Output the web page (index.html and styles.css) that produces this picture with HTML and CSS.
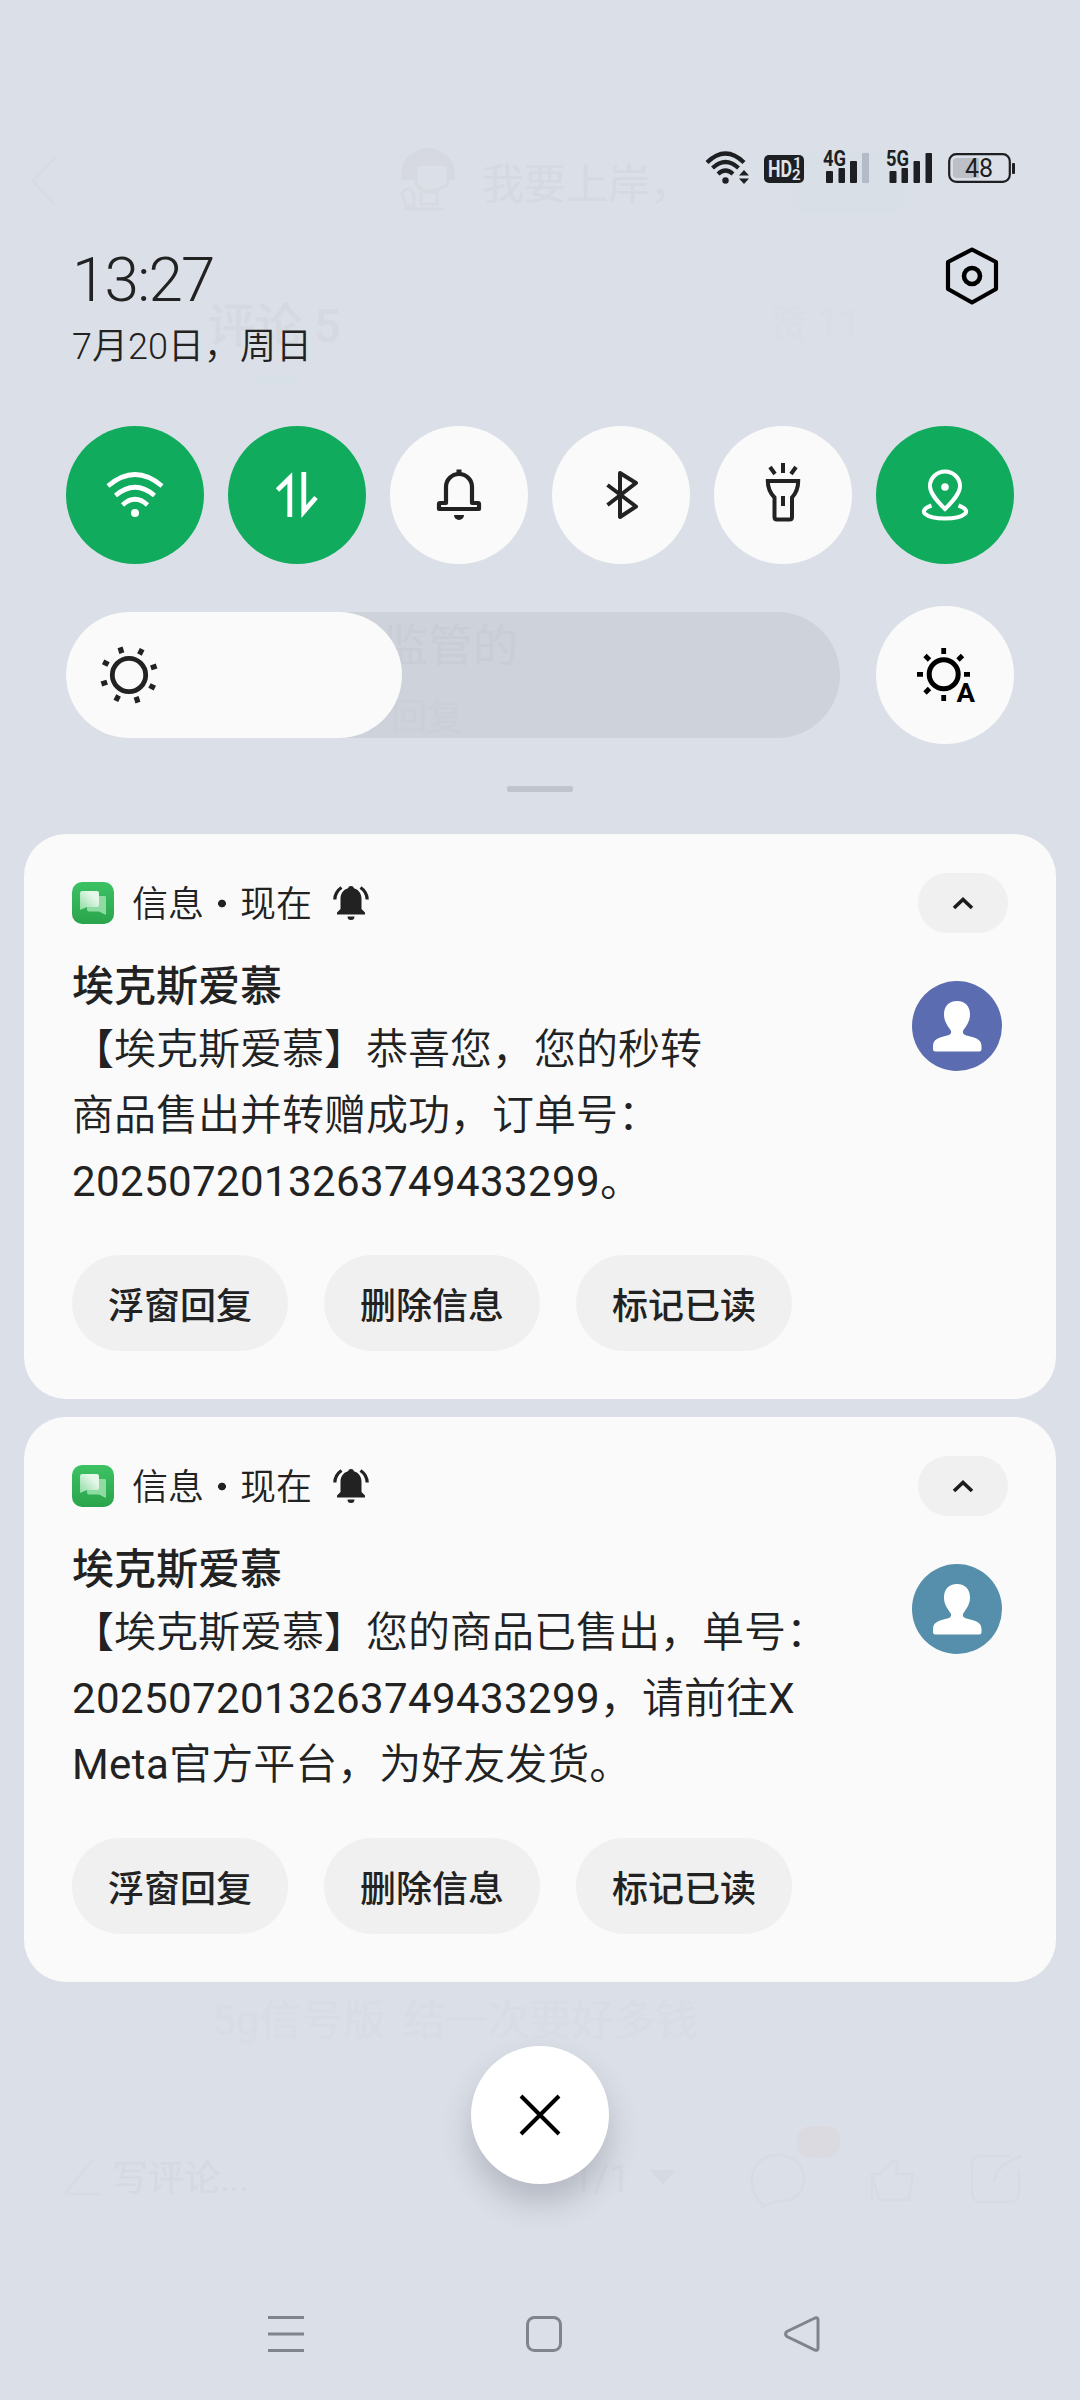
FILE: index.html
```
<!DOCTYPE html>
<html lang="zh-CN">
<head>
<meta charset="utf-8">
<title>通知中心</title>
<link rel="stylesheet" href="styles.css">
</head>
<body>
<svg class="defs" aria-hidden="true">
  <defs>
    <linearGradient id="msg-bg" x1="0" y1="0" x2="0" y2="1"><stop offset="0" stop-color="#3cc263"/><stop offset="1" stop-color="#2aa44c"/></linearGradient>
    <linearGradient id="msg-front" x1="1" y1="0" x2="0" y2="1"><stop offset="0.300" stop-color="#e4f7e9"/><stop offset="1" stop-color="#8fdca2"/></linearGradient>
    <symbol id="app" viewBox="0 0 42 42">
      <rect width="42" height="42" rx="10" fill="url(#msg-bg)"/>
      <path d="M17 14H33q1 0 1 1V33L27 29.500H17q-2 0-2-2V16z" fill="#8fdca2"/>
      <path d="M10 9H25q2 0 2 2V23q0 2-2 2H15L8 28V11q0-2 2-2z" fill="url(#msg-front)"/>
    </symbol>
    <symbol id="ring" viewBox="0 0 36 36">
      <path d="M18 1a3 3 0 0 1 3 2.300C26 4.700 28.500 9 28.500 14V24L32 27.500V29.500H4V27.500L7.500 24V14C7.500 9 10 4.700 15 3.300A3 3 0 0 1 18 1zM14.500 31.500h7a3.500 3.500 0 0 1-7 0z" fill="#222"/>
      <path d="M8.500 2.500Q2 7 1.800 14.500M27.500 2.500Q34 7 34.200 14.500" fill="none" stroke="#222" stroke-width="3.200"/>
    </symbol>
    <symbol id="up" viewBox="0 0 24 16">
      <path d="M3 13L12 4.500L21 13" fill="none" stroke="#1c1c1c" stroke-width="3.600"/>
    </symbol>
    <symbol id="person" viewBox="0 0 90 90">
      <path d="M45 20c8.500 0 13 5.500 13 13.500 0 6-2.500 10-6.500 15.500-1.200 1.900-.8 4 1.500 5C60 56.500 69.500 56.500 69.500 65v3q0 2.500-2.500 2.500H23.500q-2.500 0-2.500-2.500v-3C21 56.500 30 56.500 37 54c2.300-1 2.700-3.100 1.500-5C34.500 43.500 32 39.500 32 33.500 32 25.500 36.500 20 45 20z" fill="#fff"/>
    </symbol>
  </defs>
</svg>

<div class="screen">
  <div class="behind" aria-hidden="true">
    <svg class="behind-art" viewBox="0 0 1080 2400">
      <g fill="none" stroke="#d7dbe3" stroke-width="2.500">
        <path d="M55 157L33 181L55 205"/>
        <path d="M93 2160L65 2193M66 2194H101" />
        <path d="M762 2203q-12-8-10-26c2-14 12-22 26-22s26 9 26 24-12 24-28 22l-14 6z"/>
        <path d="M872 2174v26M872 2174h8l14-14c6 0 2 10 2 14h17l-4 26h-30zM1010 2156h-28q-10 0-10 10v26q0 10 10 10h28q9 0 9-10v-22M994 2182q2-18 28-26"/>
      </g>
      <rect x="793" y="150" width="112" height="63" rx="14" fill="#d8dfe7"/>
      <rect x="797" y="2126" width="43" height="32" rx="14" fill="#dcdae1"/>
      <rect x="256" y="375" width="40" height="10" rx="4" fill="#d6e0e6"/>
      <path d="M401 180v-6a27 26 0 0 1 54 0v6h-8v-14h-32v14z" fill="#d6d9e1"/>
      <path d="M416 166v18q11 14 32 0v-18M402 194q5-10 12 0v12h-8zM421 192h16v12h-16zM404 209h40" fill="none" stroke="#d7dae1" stroke-width="3"/>
      <path d="M650 2170h25l-12 15z" fill="#d5d9e1"/>
    </svg>
    <span class="ghost g-name">我要上岸，</span>
    <span class="ghost g-comments">评论 5</span>
    <span class="ghost g-like">赞 11</span>
    <span class="ghost g-line">5g信号版 结一次要好多钱</span>
    <span class="ghost g-write">写评论...</span>
    <span class="ghost g-page">1/1</span>
  </div>

  <header class="status">
    <svg width="46" height="36" viewBox="0 0 46 36">
      <g fill="none" stroke="#1d1f22" stroke-width="4.200">
        <path d="M2 12.500Q20.500-5.500 39 12.500"/><path d="M7.500 18Q20.500 6 33.500 18"/><path d="M13 24Q20.500 17 28 24"/>
      </g>
      <circle cx="20.500" cy="30.500" r="3.200" fill="#1d1f22"/>
      <path d="M39 20l5 5.500H34zM39 34l5-5.500H34z" fill="#1d1f22"/>
    </svg>
    <svg class="hd" width="40" height="28" viewBox="0 0 40 28">
      <rect width="40" height="28" rx="5" fill="#1d1f22"/>
      <text x="4" y="22" class="hd-main" textLength="24" lengthAdjust="spacingAndGlyphs">HD</text>
      <text x="29" y="13" class="hd-small">1</text><text x="28" y="25" class="hd-small">2</text>
    </svg>
    <svg class="sig4" width="48" height="36" viewBox="0 0 48 36">
      <text x="0" y="16" class="net" textLength="23" lengthAdjust="spacingAndGlyphs">4G</text>
      <g fill="#1d1f22"><rect x="3" y="21" width="7" height="12" rx="1"/><rect x="15.500" y="18" width="6.500" height="15" rx="1"/><rect x="27" y="11" width="7" height="22" rx="1"/></g>
      <rect x="39" y="3" width="7" height="30" rx="1" fill="#b5bbc6"/>
    </svg>
    <svg class="sig5" width="48" height="36" viewBox="0 0 48 36">
      <text x="0" y="16" class="net" textLength="23" lengthAdjust="spacingAndGlyphs">5G</text>
      <g fill="#1d1f22"><rect x="3.500" y="21" width="7" height="12" rx="1"/><rect x="15.500" y="18" width="6.500" height="15" rx="1"/><rect x="27.500" y="11" width="6.500" height="22" rx="1"/><rect x="39.500" y="3" width="6.500" height="30" rx="1"/></g>
    </svg>
    <svg class="battery" width="68" height="30" viewBox="0 0 68 30">
      <rect x="1.200" y="1.200" width="60.600" height="27.600" rx="7" fill="none" stroke="#1d1f22" stroke-width="2.200"/>
      <path d="M9 5H31V25H9q-4 0-4-4V9q0-4 4-4z" fill="#bcbfc5"/>
      <rect x="64" y="10" width="3" height="11" rx="1" fill="#1d1f22"/>
      <text x="31" y="23.500" text-anchor="middle" class="bat-text">48</text>
    </svg>
  </header>

  <section class="head">
    <div>
      <div class="clock">13:27</div>
      <div class="date">7月20日，周日</div>
    </div>
    <svg class="gear" width="56" height="60" viewBox="0 0 56 60">
      <path d="M28 3.500L52 16V43L28 56.500L4 43V16z" fill="none" stroke="#000" stroke-width="4.200" stroke-linejoin="round"/>
      <circle cx="28" cy="30" r="8" fill="none" stroke="#000" stroke-width="4.600"/>
    </svg>
  </section>

  <section class="tiles">
    <div class="tile on"><svg viewBox="0 0 138 138"><g fill="none" stroke="#fff" stroke-width="4.600"><path d="M42 60Q69 37 96 60"/><path d="M49.500 69.500Q69 53 88.500 69.500"/><path d="M56.500 79Q69 67.500 81.500 79"/></g><circle cx="69" cy="87" r="4" fill="#fff"/></svg></div>
    <div class="tile on"><svg viewBox="0 0 138 138"><path d="M49.500 64L61.800 52V91M75.800 46V85.500L88 71.500" fill="none" stroke="#fff" stroke-width="4.800" stroke-miterlimit="8"/></svg></div>
    <div class="tile"><svg viewBox="0 0 138 138"><path d="M56 77V61a13 13 0 0 1 26 0V77h6q1 0 1 1V83H49V78q0-1 1-1z" fill="none" stroke="#222" stroke-width="4.200" stroke-linejoin="round"/><path d="M69 43.500v5" stroke="#222" stroke-width="5"/><path d="M64 89h10a5 5 0 0 1-10 0z" fill="#222"/></svg></div>
    <div class="tile"><svg viewBox="0 0 138 138"><path d="M55.500 59L84 80.500L68 91V47L84 57L55.500 79" fill="none" stroke="#222" stroke-width="4" stroke-linejoin="round"/></svg></div>
    <div class="tile"><svg viewBox="0 0 138 138"><path d="M53.800 55H84.200c0 8-2 12-6.200 16.500V91q0 2.500-2.500 2.500H63q-2.500 0-2.500-2.500V71.500C56 67 53.800 63 53.800 55z" fill="none" stroke="#222" stroke-width="4"/><path d="M69 37v10M56 41l5 7M82 41l-5 7M69 70v10" stroke="#222" stroke-width="4"/></svg></div>
    <div class="tile on"><svg viewBox="0 0 138 138"><path d="M69 83C60 74 54 67 54 60a15 14.500 0 0 1 30 0C84 67 78 74 69 83z" fill="none" stroke="#fff" stroke-width="4"/><circle cx="69" cy="61" r="3.800" fill="#fff"/><path d="M55.500 79.500C40 85 50 92.500 69 92.500S98 85 82.500 79.500" fill="none" stroke="#fff" stroke-width="4"/></svg></div>
  </section>

  <section class="bright">
    <div class="slider">
      <div class="fill">
        <svg width="60" height="60" viewBox="-30 -30 60 60"><circle r="16.700" fill="none" stroke="#222" stroke-width="4.800"/><g stroke="#222" stroke-width="5.200"><path id="ray" d="M0-23v-6" transform="rotate(-18)"/><use href="#ray" transform="rotate(45)"/><use href="#ray" transform="rotate(90)"/><use href="#ray" transform="rotate(135)"/><use href="#ray" transform="rotate(180)"/><use href="#ray" transform="rotate(225)"/><use href="#ray" transform="rotate(270)"/><use href="#ray" transform="rotate(315)"/></g></svg>
      </div>
      <span class="ghost g-reg">监管的</span>
      <span class="ghost g-reply">回复</span>
    </div>
    <div class="tile"><svg viewBox="0 0 138 138"><circle cx="67.700" cy="68.300" r="14.500" fill="none" stroke="#000" stroke-width="5"/><path d="M67.700 42v6M67.700 89v6M41 68.300h6M88 68.300h6M49 49.500l4.500 4.500M86.500 49.500l-4.500 4.500M49 87l4.500-4.500" stroke="#000" stroke-width="4.800"/><text x="80.500" y="95.500" class="auto" textLength="18.500" lengthAdjust="spacingAndGlyphs">A</text></svg></div>
  </section>

  <div class="handle"></div>

  <main class="cards">
    <article class="card">
      <div class="card-head"><svg class="app" width="42" height="42"><use href="#app"/></svg><span>信息</span><i></i><span>现在</span><svg class="ring" width="36" height="36"><use href="#ring"/></svg><button class="fold"><svg width="24" height="16"><use href="#up"/></svg></button></div>
      <div class="card-main">
        <div><h2>埃克斯爱慕</h2><p>【埃克斯爱慕】恭喜您，您的秒转<br>商品售出并转赠成功，订单号：<br><span class="lat">2025072013263749433299</span>。</p></div>
        <svg class="avatar indigo" width="90" height="90"><use href="#person"/></svg>
      </div>
      <div class="actions"><button>浮窗回复</button><button>删除信息</button><button>标记已读</button></div>
    </article>
    <article class="card">
      <div class="card-head"><svg class="app" width="42" height="42"><use href="#app"/></svg><span>信息</span><i></i><span>现在</span><svg class="ring" width="36" height="36"><use href="#ring"/></svg><button class="fold"><svg width="24" height="16"><use href="#up"/></svg></button></div>
      <div class="card-main">
        <div><h2>埃克斯爱慕</h2><p>【埃克斯爱慕】您的商品已售出，单号：<br><span class="lat">2025072013263749433299</span>，请前往<span class="lat">X</span><br><span class="lat">Meta</span>官方平台，为好友发货。</p></div>
        <svg class="avatar teal" width="90" height="90"><use href="#person"/></svg>
      </div>
      <div class="actions"><button>浮窗回复</button><button>删除信息</button><button>标记已读</button></div>
    </article>
  </main>

  <button class="close"><svg width="48" height="48" viewBox="0 0 48 48"><path d="M5 5L43 43M43 5L5 43" stroke="#000" stroke-width="4"/></svg></button>

  <nav class="nav">
    <svg width="36" height="36" viewBox="0 0 36 36"><path d="M0 1.500H36M0 18H36M0 34.500H36"/></svg>
    <svg width="36" height="36" viewBox="0 0 36 36"><rect x="1.500" y="1.500" width="33" height="33" rx="7"/></svg>
    <svg width="36" height="36" viewBox="0 0 36 36"><path d="M31 2L3 15.500q-3 2.500 0 5L31 34q3 1 3-2V4q0-3-3-2z"/></svg>
  </nav>
</div>
</body>
</html>
```
FILE: styles.css
```
* { box-sizing: border-box; }
body { margin: 0; background: #dbdfe7; }
button { border: 0; padding: 0; font: inherit; color: inherit; }
svg { display: block; flex: none; }
.defs { position: absolute; width: 0; height: 0; }

.screen {
  position: relative;
  isolation: isolate;
  width: 1080px;
  height: 2400px;
  overflow: hidden;
  display: flex;
  flex-direction: column;
  color: #222;
  font-family: Roboto, "Noto Sans CJK SC", sans-serif;
  background: #dbdfe7;
}

/* app content showing faintly through the shade */
.behind { position: absolute; inset: 0; z-index: -1; }
.behind-art { width: 1080px; height: 2400px; }
.ghost { position: absolute; white-space: nowrap; line-height: 1; color: #d5d9e1; }
.g-name { left: 482px; top: 164px; font-size: 42px; }
.g-comments { left: 208px; top: 302px; font-size: 47px; font-weight: 500; }
.g-like { left: 770px; top: 305px; font-size: 38px; color: #d9dde5; }
.g-line { left: 212px; top: 2000px; font-size: 42px; color: #d8dce4; word-spacing: 8px; }
.g-write { left: 112px; top: 2161px; font-size: 36px; }
.g-page { left: 572px; top: 2160px; font-size: 38px; color: #d6dae2; }
.g-reg { left: 317px; top: 12px; font-size: 45px; color: #c9ced6; }
.g-reply { left: 325px; top: 88px; font-size: 36px; color: #cbd0d8; }

.status {
  height: 186px;
  padding: 150px 65px 0 705px;
  display: flex;
  align-items: flex-start;
}
.hd { margin: 5px 0 0 13px; }
.hd-main { font: 700 23px Roboto, sans-serif; fill: #dfe2e8; }
.hd-small { font: 700 15px Roboto, sans-serif; fill: #dfe2e8; }
.net { font: 700 22px Roboto, sans-serif; fill: #1d1f22; }
.sig4 { margin-left: 19px; }
.sig5 { margin-left: 15px; }
.battery { margin: 3px 0 0 14px; }
.bat-text { font: 400 25px Roboto, sans-serif; fill: #1d1f22; }

.head {
  height: 240px;
  padding: 58px 80px 0 72px;
  display: flex;
  justify-content: space-between;
}
.clock { font-size: 62px; line-height: 72px; font-weight: 350; letter-spacing: -1.8px; }
.date { margin-top: 5px; font-size: 36px; line-height: 52px; font-weight: 350; }
.gear { margin-top: 2px; }

.tiles { display: flex; gap: 24px; padding: 0 66px; height: 180px; }
.tile { width: 138px; height: 138px; border-radius: 50%; background: #fafafa; flex: none; }
.tile.on { background: #11ab5e; }
.auto { font: 700 26px Roboto, sans-serif; }

.bright { display: flex; align-items: center; justify-content: space-between; padding: 0 66px; height: 138px; }
.slider { position: relative; width: 774px; height: 126px; border-radius: 63px; background: #ced2da; }
.fill { position: relative; z-index: 1; width: 336px; height: 126px; border-radius: 63px; background: #fafafa; padding: 33px; }
.handle { width: 66px; height: 6px; margin: 42px auto; border-radius: 2px; background: #c0c4cd; flex: none; }

.cards { display: flex; flex-direction: column; gap: 18px; padding: 0 24px; }
.card { height: 565px; border-radius: 42px; background: #fafafa; padding: 39px 48px 48px; }
.card-head { display: flex; align-items: center; height: 60px; font-size: 36px; font-weight: 350; line-height: 60px; }
.card-head span { padding-top: 4px; }
.app { margin: -1px 18px 0 0; }
.card-head i { width: 36px; height: 9px; background: radial-gradient(circle, #222 3.6px, transparent 4.2px); }
.ring { margin: 0 0 0 21px; }
.fold { margin-left: auto; width: 90px; height: 60px; border-radius: 30px; background: #f0f0f0; display: grid; place-items: center; }
.card-main { display: flex; justify-content: space-between; height: 322px; padding-top: 24px; }
.card-main h2 { margin: 0; font-size: 42px; line-height: 60px; font-weight: 500; }
.card-main p { margin: 0; font-size: 42px; line-height: 66px; font-weight: 350; white-space: nowrap; }
.lat { letter-spacing: 0.4px; font-weight: 400; }
.avatar { margin: 24px 6px 0 0; border-radius: 50%; }
.indigo { background: #5c6cb0; }
.teal { background: #558fab; }
.actions { display: flex; gap: 36px; }
.actions button { width: 216px; height: 96px; border-radius: 48px; background: #f0f0f0; font-size: 36px; font-weight: 500; }

.close {
  width: 138px; height: 138px; margin: 64px auto 0; flex: none;
  border-radius: 50%; background: #fff;
  display: grid; place-items: center;
  box-shadow: 0 18px 30px rgba(60, 64, 80, .24);
}
.nav { margin: 132px 260px 0 268px; display: flex; justify-content: space-between; }
.nav svg { fill: none; stroke: #81848c; stroke-width: 3; }
```
